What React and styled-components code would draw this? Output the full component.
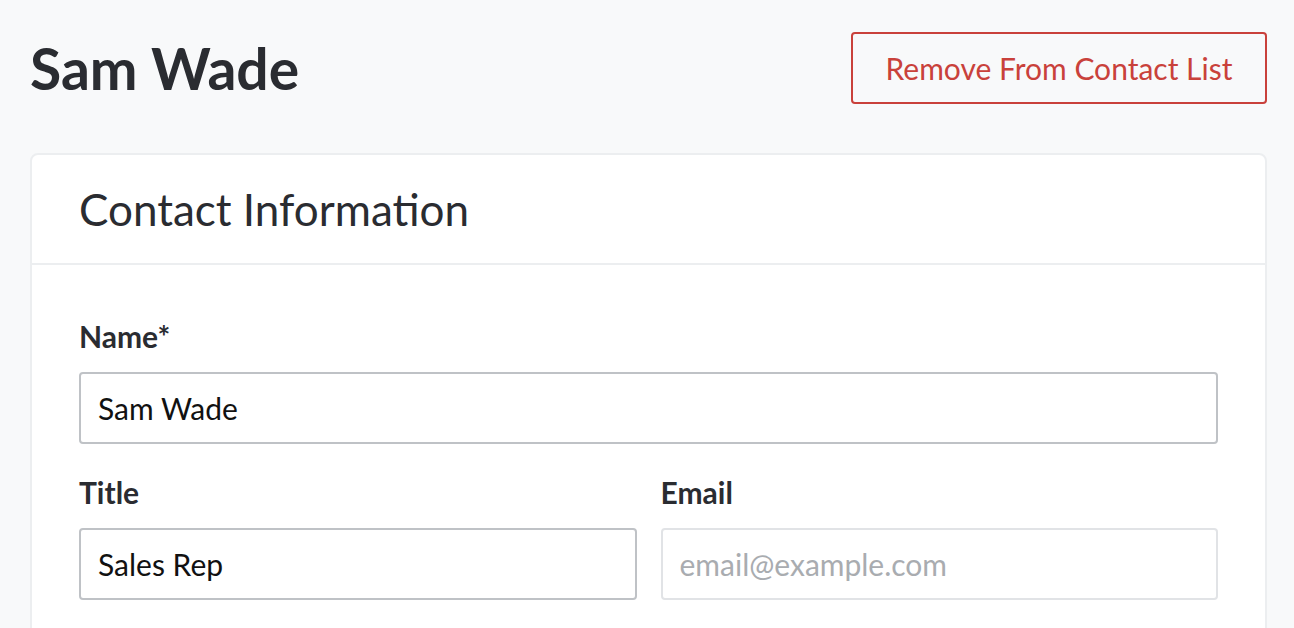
import React from 'react';
import styled, { createGlobalStyle } from 'styled-components';

const GlobalStyle = createGlobalStyle`
  html, body {
    margin: 0;
    padding: 0;
    background: #f8f9fa;
  }
  body {
    font-family: Lato, "Liberation Sans", sans-serif;
    color: #2a2c31;
  }
`;

const Page = styled.div`
  padding: 32px 27px 0 30px;
`;

const TopBar = styled.div`
  display: flex;
  align-items: center;
  justify-content: space-between;
  height: 72px;
`;

const Heading = styled.h1`
  margin: 0;
  font-size: 57px;
  font-weight: 700;
  line-height: 72px;
  color: #2a2c31;
`;

const DangerButton = styled.button`
  height: 72px;
  width: 416px;
  border: 2px solid #c9413b;
  border-radius: 4px;
  background: transparent;
  color: #c9413b;
  font-family: inherit;
  font-size: 30px;
  padding: 0;
  cursor: pointer;
`;

const Card = styled.section`
  margin-top: 49px;
  background: #fff;
  border: 2px solid #eceef0;
  border-radius: 8px;
`;

const CardHeader = styled.header`
  height: 108px;
  display: flex;
  align-items: center;
  padding: 0 47px;
  border-bottom: 2px solid #eceef0;
`;

const CardTitle = styled.h2`
  margin: 0;
  font-size: 44px;
  font-weight: 400;
  color: #2a2c31;
`;

const CardBody = styled.div`
  padding: 53px 47px 40px;
  display: flex;
  flex-direction: column;
  gap: 30px;
`;

const Row = styled.div`
  display: grid;
  grid-template-columns: ${({ cols }) => (cols === 2 ? '1fr 1fr' : '1fr')};
  column-gap: 24px;
`;

const Field = styled.div`
  display: flex;
  flex-direction: column;
`;

const Label = styled.label`
  font-size: 30px;
  font-weight: 700;
  line-height: 36px;
  margin-bottom: 18px;
  color: #2a2c31;
`;

const Input = styled.input`
  box-sizing: border-box;
  height: 72px;
  width: 100%;
  padding: 0 17px;
  border: 2px solid ${({ $muted }) => ($muted ? '#e1e3e6' : '#bfc2c6')};
  border-radius: 4px;
  background: #fff;
  font-family: inherit;
  font-size: 30px;
  color: #111;
  outline: none;

  &::placeholder {
    color: #a9acb0;
  }
`;

export default function App() {
  return (
    <>
      <GlobalStyle />
      <Page>
        <TopBar>
          <Heading>Sam Wade</Heading>
          <DangerButton>Remove From Contact List</DangerButton>
        </TopBar>
        <Card>
          <CardHeader>
            <CardTitle>Contact Information</CardTitle>
          </CardHeader>
          <CardBody>
            <Row>
              <Field>
                <Label>Name*</Label>
                <Input defaultValue="Sam Wade" />
              </Field>
            </Row>
            <Row cols={2}>
              <Field>
                <Label>Title</Label>
                <Input defaultValue="Sales Rep" />
              </Field>
              <Field>
                <Label>Email</Label>
                <Input $muted placeholder="email@example.com" />
              </Field>
            </Row>
          </CardBody>
        </Card>
      </Page>
    </>
  );
}
